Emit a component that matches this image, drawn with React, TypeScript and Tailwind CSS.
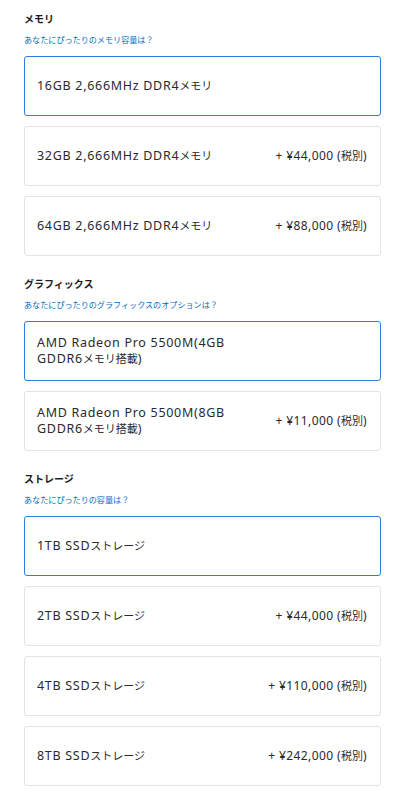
import React from 'react'

type Option = { label: string[]; price?: string }

type Section = {
  title: string
  link: string
  options: Option[]
}

const sections: Section[] = [
  {
    title: 'メモリ',
    link: 'あなたにぴったりのメモリ容量は？',
    options: [
      { label: ['16GB 2,666MHz DDR4メモリ'] },
      { label: ['32GB 2,666MHz DDR4メモリ'], price: '+ ¥44,000 (税別)' },
      { label: ['64GB 2,666MHz DDR4メモリ'], price: '+ ¥88,000 (税別)' },
    ],
  },
  {
    title: 'グラフィックス',
    link: 'あなたにぴったりのグラフィックスのオプションは？',
    options: [
      { label: ['AMD Radeon Pro 5500M(4GB', 'GDDR6メモリ搭載)'] },
      { label: ['AMD Radeon Pro 5500M(8GB', 'GDDR6メモリ搭載)'], price: '+ ¥11,000 (税別)' },
    ],
  },
  {
    title: 'ストレージ',
    link: 'あなたにぴったりの容量は？',
    options: [
      { label: ['1TB SSDストレージ'] },
      { label: ['2TB SSDストレージ'], price: '+ ¥44,000 (税別)' },
      { label: ['4TB SSDストレージ'], price: '+ ¥110,000 (税別)' },
      { label: ['8TB SSDストレージ'], price: '+ ¥242,000 (税別)' },
    ],
  },
]

// latin glyphs run wide, kana/kanji run narrow in the original font
function Mixed({ text }: { text: string }) {
  const parts = text.split(/([\u3000-\u9fff\uff00-\uffef]+)/)
  return (
    <>
      {parts.map((p, i) =>
        i % 2 === 1 ? (
          <span key={i} className="text-[11px] leading-4 tracking-normal">{p}</span>
        ) : (
          <React.Fragment key={i}>{p}</React.Fragment>
        ),
      )}
    </>
  )
}

export default function App() {
  return (
    <div
      className="w-[409px] min-h-[800px] bg-white pl-6 pr-7 pt-[11px] pb-4 text-[#333]"
      style={{ fontFamily: '"Noto Sans", "Noto Sans CJK JP", sans-serif' }}
    >
      {sections.map((s, si) => (
        <section key={s.title} className={si > 0 ? 'mt-5' : ''}>
          <h2 className="text-[10px] font-bold leading-4 text-[#1d1d1f]">{s.title}</h2>
          <a className="mt-[6px] block text-[8.1px] leading-[14px] text-[#0070c9]">{s.link}</a>
          <div className="mt-[9px] flex flex-col gap-[10px]">
            {s.options.map((o, i) => (
              <div
                key={o.label.join('')}
                className={`flex h-[60px] items-center justify-between rounded-[3px] bg-white pl-3 pr-[13px] ${
                  i === 0
                    ? 'border-[1.5px] border-[#2f7de1]'
                    : 'border border-[#e3e3e3]'
                }`}
              >
                <div className="flex w-[205px] flex-col text-[12.5px] leading-4 tracking-[0.7px] text-[#2a2a2a]">
                  {o.label.map(line => (
                    <span key={line} className="whitespace-nowrap">
                      <Mixed text={line} />
                    </span>
                  ))}
                </div>
                {o.price && (
                  <span className="text-[12px] leading-4 tracking-[0.4px] text-[#2a2a2a]">
                    <Mixed text={o.price} />
                  </span>
                )}
              </div>
            ))}
          </div>
        </section>
      ))}
    </div>
  )
}
